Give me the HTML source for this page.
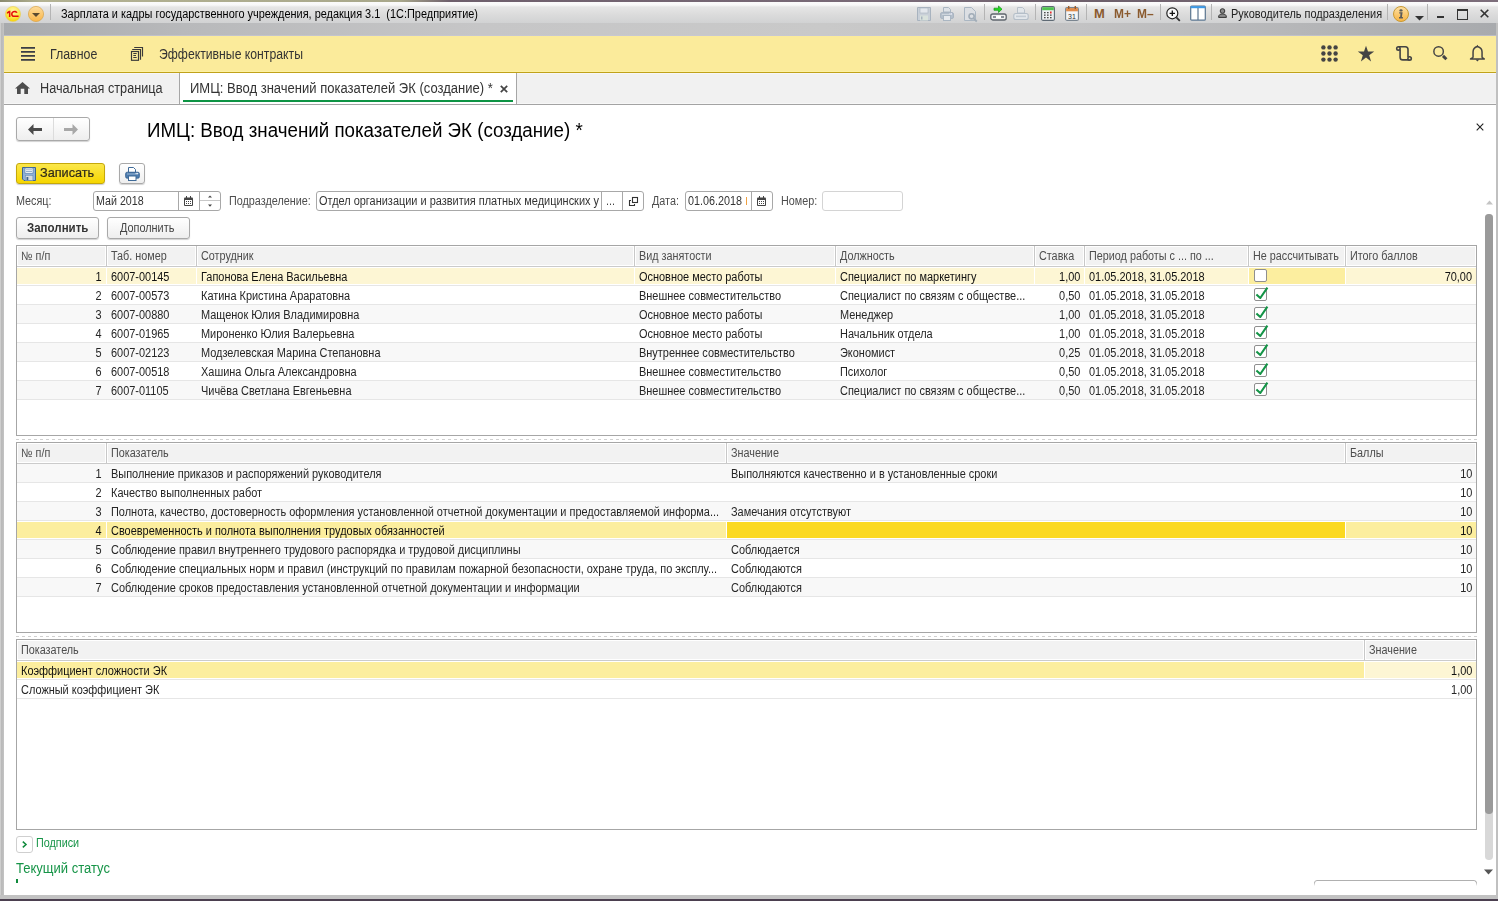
<!DOCTYPE html>
<html><head><meta charset="utf-8">
<style>
*{margin:0;padding:0;box-sizing:border-box}
html,body{width:1498px;height:901px;overflow:hidden;background:#fff;font-family:"Liberation Sans",sans-serif;color:#333}
.a{position:absolute;white-space:nowrap}
svg{position:absolute;overflow:visible}
.sep{position:absolute;width:1px;background:#b4b4b4;top:4px;height:16px}
.fld{position:absolute;height:20px;border:1px solid #a8a8a8;border-radius:3px;background:#fff}
.btn{position:absolute;border:1px solid #a9a9a9;border-radius:3px;background:linear-gradient(#ffffff,#eeeeee);box-shadow:0 1px 1px rgba(0,0,0,.18)}
.chk{position:absolute;width:13px;height:13px;border:1px solid #8f8f8f;border-radius:2px;background:#fff}
.dash{position:absolute;left:16px;width:1461px;height:1px;background:repeating-linear-gradient(90deg,#d0d0d0 0 3px,transparent 3px 6px)}
</style></head><body>
<div class="a" style="left:0;top:0;width:1498px;height:2px;background:linear-gradient(90deg,#8a8a70 0px,#b3b292 40px,#a9a88c 400px,#6e5f6c 450px,#7a6b78 900px,#6e606c 1100px,#7d6e7b 1498px)"></div>
<div class="a" style="left:0;top:2px;width:1498px;height:21px;background:linear-gradient(#fbfbfb 0px,#f8f8f8 3px,#e6e6e6 5px,#dcdcdc 12px,#d1d2d3 21px)"></div>
<div class="a" style="left:4px;top:23px;width:1492px;height:13px;background:linear-gradient(90deg,#a8aaad 0%,#b8b9bb 12%,#c6c6c7 32%,#c9c9c9 55%,#c3c3c4 72%,#b4b5b7 88%,#a8aaad 100%)"></div>
<div class="a" style="left:4px;top:35px;width:1492px;height:1px;background:rgba(200,200,215,.6)"></div>
<div class="a" style="left:0;top:23px;width:4px;height:876px;background:linear-gradient(to right,#d8d8d8,#b8b8b8 40%,#c4c4c4)"></div>
<div class="a" style="left:1496px;top:23px;width:2px;height:876px;background:#c0c0c0"></div>
<div class="a" style="left:4px;top:36px;width:1492px;height:38px;background:linear-gradient(#fbeb9b 0 35px,#fdf1a2 35px 36px,#c0a21a 36px 37px,#f6f6f9 37px 38px)"></div>
<div class="a" style="left:4px;top:74px;width:1492px;height:31px;background:linear-gradient(#f1f1f1 0 29px,#f7f7f7 29px 30px,#a3a3a3 30px 31px)"></div>
<div class="a" style="left:0;top:895px;width:1498px;height:4px;background:#c2c2c2"></div>
<div class="a" style="left:0;top:899px;width:1498px;height:2px;background:#4b3f4f"></div>


<svg style="left:5px;top:6px" width="16" height="16" viewBox="0 0 16 16">
 <defs><radialGradient id="g1" cx="50%" cy="30%" r="70%"><stop offset="0" stop-color="#fff6a8"/><stop offset=".6" stop-color="#fce84a"/><stop offset="1" stop-color="#f6d000"/></radialGradient></defs>
 <circle cx="8" cy="8" r="7.6" fill="url(#g1)" stroke="#e9cf60" stroke-width=".6"/>
 <path d="M1.9 6.3 L4 4.7 H5.4 V11.1 H3.9 V6.9 L1.9 7.8 Z" fill="#e60f0a"/>
 <path d="M12.6 6.6 C12 5.3 10.9 4.7 9.6 4.7 C7.5 4.7 6 6.1 6 8 C6 9.9 7.2 11.1 9 11.1 H13.6 V9.6 H9.3 C8.2 9.6 7.6 9 7.6 8 C7.6 6.9 8.4 6.2 9.6 6.2 C10.3 6.2 10.8 6.5 11.1 7.1 Z" fill="#e60f0a"/>
</svg>
<svg style="left:28px;top:6px" width="16" height="16" viewBox="0 0 16 16">
 <defs><linearGradient id="g2" x1="0" y1="0" x2="0" y2="1"><stop offset="0" stop-color="#fddc9c"/><stop offset="1" stop-color="#f9b548"/></linearGradient></defs>
 <circle cx="8" cy="8" r="7.6" fill="url(#g2)" stroke="#d9a346" stroke-width=".7"/>
 <path d="M4 7 H12 L8 11 Z" fill="#5a4a30"/>
</svg>
<div class="sep" style="left:50px"></div>

<div class="a" style="left:61px;top:8px;font-size:12.5px;line-height:12.5px;color:#000;font-weight:normal;transform:scaleX(0.874);transform-origin:0 0;white-space:pre">Зарплата и кадры государственного учреждения, редакция 3.1  (1С:Предприятие)</div>

<svg style="left:917px;top:7px" width="14" height="14" viewBox="0 0 14 14"><path d="M.5 .5H13.5V13.5H.5Z" fill="#c9d0d8" stroke="#a8b3bf"/><rect x="3" y="1" width="8" height="5" fill="#e3e7ec" stroke="#a8b3bf" stroke-width=".6"/><rect x="3" y="8.5" width="8" height="5" fill="#d9e2dc"/><rect x="4" y="9.5" width="1.5" height="3" fill="#a8b3bf"/></svg>
<svg style="left:940px;top:7px" width="14" height="14" viewBox="0 0 14 14"><path d="M3.5 .5H8.5L10.5 2.5V5H3.5Z" fill="#dfe3e8" stroke="#aab6c2"/><rect x=".5" y="5.5" width="13" height="6" rx="1.5" fill="#b4bfcb" stroke="#a3afbc" stroke-width=".8"/><path d="M2 7.5H12" stroke="#d4dae1" stroke-width=".8"/><rect x="3.5" y="8.5" width="7" height="5" fill="#e6e9ed" stroke="#aab6c2"/><rect x="9.5" y="6.3" width="1" height="1" fill="#eef"/><rect x="11" y="6.3" width="1" height="1" fill="#eef"/></svg>
<svg style="left:964px;top:7px" width="15" height="15" viewBox="0 0 15 15"><path d="M.5 .5H7.5L11.5 4.5V13.5H.5Z" fill="#dcdfe3" stroke="#aab6c2"/><circle cx="7.6" cy="9.3" r="2.6" fill="none" stroke="#a2adb8" stroke-width="1.6"/><path d="M9.6 11.3L12.8 14.5" stroke="#a2adb8" stroke-width="1.8"/></svg>
<div class="sep" style="left:984px"></div>
<svg style="left:990px;top:5px" width="17" height="16" viewBox="0 0 17 16"><path d="M4 3.2H8.5V1L12 4.2L8.5 7.5V5.3H4Z" fill="#22dd22" stroke="#149414" stroke-width=".7"/><rect x=".8" y="9" width="15.4" height="6" rx="2" fill="#f0f0f0" stroke="#5f666e" stroke-width="1.3"/><rect x="3" y="11" width="11" height="2" fill="#8a9098"/><rect x="6" y="11" width="5" height="2" fill="#fff"/></svg>
<svg style="left:1013px;top:7px" width="16" height="14" viewBox="0 0 16 14"><path d="M4.5 .5H9.5L11.5 2.5V6H4.5Z" fill="#e2e6ea" stroke="#b8c1ca"/><rect x=".8" y="6.5" width="14.4" height="6" rx="2" fill="#e3e7eb" stroke="#b4bec8" stroke-width="1.1"/><rect x="3" y="8.6" width="10" height="1.6" fill="#c3cbd3"/></svg>
<div class="sep" style="left:1035px"></div>
<svg style="left:1041px;top:6px" width="14" height="15" viewBox="0 0 14 15"><rect x=".6" y=".6" width="12.8" height="13.8" rx="1.5" fill="#eef1f3" stroke="#5f6a74" stroke-width="1.1"/><rect x="1.2" y="1.2" width="11.6" height="3" fill="#52c552"/><g fill="#4a4a4a"><rect x="3" y="6" width="1.6" height="1.3"/><rect x="6" y="6" width="1.6" height="1.3"/><rect x="3" y="8.5" width="1.6" height="1.3"/><rect x="6" y="8.5" width="1.6" height="1.3"/><rect x="9" y="8.5" width="1.6" height="1.3"/><rect x="3" y="11" width="1.6" height="1.3"/><rect x="6" y="11" width="1.6" height="1.3"/><rect x="9" y="11" width="1.6" height="1.3"/></g><rect x="9" y="5.5" width="1.6" height="2" fill="#e52a2a"/></svg>
<svg style="left:1065px;top:6px" width="14" height="15" viewBox="0 0 14 15"><rect x=".6" y="1.6" width="12.8" height="12.8" rx="1.5" fill="#f4f5f6" stroke="#7a8590" stroke-width="1.1"/><rect x="1.1" y="2.1" width="11.8" height="3.2" fill="#e08b4a"/><rect x="3" y="0" width="1.4" height="3" fill="#9a5a2a"/><rect x="9.6" y="0" width="1.4" height="3" fill="#9a5a2a"/><text x="7" y="12.6" font-size="7" text-anchor="middle" fill="#333" font-family="Liberation Sans">31</text></svg>
<div class="sep" style="left:1086px"></div>
<svg style="left:1166px;top:7px" width="15" height="15" viewBox="0 0 15 15"><circle cx="6.3" cy="6.3" r="5.5" fill="#fafafa" stroke="#222" stroke-width="1.2"/><path d="M3.6 6.3H9M6.3 3.6V9" stroke="#111" stroke-width="1.3"/><path d="M10.3 10.3 L13.8 13.8" stroke="#333" stroke-width="1.8"/></svg>
<svg style="left:1190px;top:5px" width="16" height="16" viewBox="0 0 16 16"><rect x=".7" y="1.2" width="14.6" height="14" rx="1" fill="#fff" stroke="#5a7590" stroke-width="1.2"/><rect x=".7" y="1.2" width="14.6" height="2" fill="#3b9ae8"/><path d="M8 3V15" stroke="#5a7590" stroke-width="1.2"/></svg>
<div class="sep" style="left:1160px"></div>
<div class="sep" style="left:1211px"></div>
<svg style="left:1218px;top:8px" width="9" height="10" viewBox="0 0 9 10"><circle cx="4.5" cy="3" r="2.3" fill="#8a8a8a" stroke="#333" stroke-width="1"/><path d="M.6 9.4 C.6 6.6 2.2 6 4.5 6 C6.8 6 8.4 6.6 8.4 9.4Z" fill="#8a8a8a" stroke="#333" stroke-width="1" stroke-linejoin="round"/></svg>
<div class="sep" style="left:1387px"></div>
<svg style="left:1393px;top:6px" width="16" height="16" viewBox="0 0 16 16"><defs><linearGradient id="g3" x1="0" y1="0" x2="0" y2="1"><stop offset="0" stop-color="#fde1a6"/><stop offset="1" stop-color="#f8b443"/></linearGradient></defs><circle cx="8" cy="8" r="7.5" fill="url(#g3)" stroke="#c99a34" stroke-width="1"/><ellipse cx="8" cy="4.4" rx="1.6" ry="1.2" fill="#5a5a5a"/><path d="M6.2 6.2H9.6L8.9 11H9.9V12.6H6V11H7.1L7.5 7.6H6.2Z" fill="#5a5a5a"/></svg>
<svg style="left:1415px;top:16px" width="9" height="5" viewBox="0 0 9 5"><path d="M0 0H9L4.5 4.5Z" fill="#333"/></svg>
<div class="sep" style="left:1427px"></div>
<div class="a" style="left:1437px;top:16px;width:7px;height:2px;background:#333"></div>
<div class="a" style="left:1457px;top:9px;width:11px;height:11px;border:1px solid #333;border-top-width:2px"></div>
<svg style="left:1480px;top:9px" width="9" height="9" viewBox="0 0 9 9"><path d="M.7 .7L8.3 8.3M8.3 .7L.7 8.3" stroke="#333" stroke-width="1.6"/></svg>

<div class="a" style="left:1094px;top:7px;font-size:13px;line-height:13px;color:#8a5a2e;font-weight:bold;transform:scaleX(1.0);transform-origin:0 0;">M</div>
<div class="a" style="left:1114px;top:7px;font-size:13px;line-height:13px;color:#8a5a2e;font-weight:bold;transform:scaleX(0.92);transform-origin:0 0;">M+</div>
<div class="a" style="left:1137px;top:7px;font-size:13px;line-height:13px;color:#8a5a2e;font-weight:bold;transform:scaleX(0.92);transform-origin:0 0;">M–</div>
<div class="a" style="left:1231px;top:8px;font-size:12.5px;line-height:12.5px;color:#222;font-weight:normal;transform:scaleX(0.875);transform-origin:0 0;">Руководитель подразделения</div>

<svg style="left:21px;top:47px" width="14" height="14" viewBox="0 0 14 14"><path d="M0 .95H14M0 4.95H14M0 8.95H14M0 12.95H14" stroke="#3a3d45" stroke-width="1.8"/></svg>
<svg style="left:130px;top:46px" width="14" height="16" viewBox="0 0 14 16"><g fill="none" stroke="#3a3a3a" stroke-width="1.15"><rect x="1.5" y="5.5" width="7" height="8.8"/><path d="M2.2 3.5H10.5V13.8"/><path d="M4.2 1.5H12.5V10.6"/></g><path d="M3.3 7.5H6.7M3.3 9.5H6M3.3 11.5H6.7" stroke="#3a3a3a" stroke-width="1"/></svg>
<svg style="left:1321px;top:45px" width="17" height="17" viewBox="0 0 17 17"><g fill="#444"><circle cx="2.4" cy="2.4" r="2.2"/><circle cx="8.5" cy="2.4" r="2.2"/><circle cx="14.6" cy="2.4" r="2.2"/><circle cx="2.4" cy="8.5" r="2.2"/><circle cx="8.5" cy="8.5" r="2.2"/><circle cx="14.6" cy="8.5" r="2.2"/><circle cx="2.4" cy="14.6" r="2.2"/><circle cx="8.5" cy="14.6" r="2.2"/><circle cx="14.6" cy="14.6" r="2.2"/></g></svg>
<svg style="left:1357px;top:45px" width="18" height="17" viewBox="0 0 18 17"><path d="M9 .8L11 6.6H17.2L12.2 10.3L14.1 16.4L9 12.6L3.9 16.4L5.8 10.3L.8 6.6H7Z" fill="#444"/></svg>
<svg style="left:1394px;top:44px" width="20" height="20" viewBox="0 0 20 20"><g fill="none" stroke="#444" stroke-width="1.6"><path d="M4.4 2.8 H11.3 Q14 2.8 14 5.5 V13"/><path d="M6.1 5.5 V13.2 Q6.1 15.9 8.8 15.9 H15.4"/><circle cx="4.4" cy="4.4" r="1.7"/><circle cx="15.6" cy="14.4" r="1.7"/></g></svg>
<svg style="left:1432px;top:45px" width="17" height="17" viewBox="0 0 17 17"><circle cx="6.6" cy="6.4" r="4.75" fill="none" stroke="#444" stroke-width="1.45"/><path d="M11 10.9 L14.4 14.3" stroke="#444" stroke-width="2.9"/></svg>
<svg style="left:1469px;top:44px" width="17" height="19" viewBox="0 0 17 19"><path d="M4.05 13.3 V8 C4.05 5 6 3 8.4 2.4 C10.8 3 13.05 5 13.05 8 V13.3 C13.05 14 15.3 14.2 15.3 14.9 H1.5 C1.5 14.2 4.05 14 4.05 13.3Z" fill="none" stroke="#444" stroke-width="1.5" stroke-linejoin="round"/><path d="M7.2 2.7 L8.4 .7 L9.6 2.7Z M6.5 15.4 L8.4 17.6 L10.3 15.4Z" fill="#444"/></svg>

<div class="a" style="left:50px;top:47px;font-size:14px;line-height:14px;color:#333;font-weight:normal;transform:scaleX(0.884);transform-origin:0 0;">Главное</div>
<div class="a" style="left:159px;top:47px;font-size:14px;line-height:14px;color:#333;font-weight:normal;transform:scaleX(0.873);transform-origin:0 0;">Эффективные контракты</div>

<svg style="left:15px;top:82px" width="15" height="12" viewBox="0 0 15 12"><path d="M7.5 0L15 6.6H13V12H9.3V6.8H5.7V12H2V6.6H0Z" fill="#4d4d4d"/></svg>
<div class="a" style="left:179px;top:73px;width:338px;height:31px;background:#fff;border-left:1px solid #a6a6a6;border-right:1px solid #a6a6a6"></div>
<svg style="left:500px;top:85px" width="8" height="8" viewBox="0 0 8 8"><path d="M.8 .8L7.2 7.2M7.2 .8L.8 7.2" stroke="#444" stroke-width="1.7"/></svg>
<div class="a" style="left:183px;top:100px;width:330px;height:2px;background:#0d9444"></div>

<div class="a" style="left:40px;top:81px;font-size:14px;line-height:14px;color:#333;font-weight:normal;transform:scaleX(0.905);transform-origin:0 0;">Начальная страница</div>
<div class="a" style="left:190px;top:81px;font-size:14px;line-height:14px;color:#333;font-weight:normal;transform:scaleX(0.93);transform-origin:0 0;">ИМЦ: Ввод значений показателей ЭК (создание) *</div>

<div class="btn" style="left:16px;top:117px;width:74px;height:24px"></div>
<div class="a" style="left:53px;top:118px;width:1px;height:22px;background:#dcdcdc"></div>
<svg style="left:28px;top:124px" width="14" height="11" viewBox="0 0 14 11"><path d="M0 5.5L5.5 0V4H14V7H5.5V11Z" fill="#4a4a4a"/></svg>
<svg style="left:64px;top:124px" width="14" height="11" viewBox="0 0 14 11"><path d="M14 5.5L8.5 0V4H0V7H8.5V11Z" fill="#a8a8a8"/></svg>
<svg style="left:1475.5px;top:122.5px" width="8" height="8" viewBox="0 0 8 8"><path d="M.7 .7L7.3 7.3M7.3 .7L.7 7.3" stroke="#222" stroke-width="1.1"/></svg>
<div class="a" style="left:16px;top:163px;width:89px;height:21px;border:1px solid #c5a80a;border-radius:3px;background:linear-gradient(#fbe74a,#f6d600);box-shadow:0 1px 1px rgba(0,0,0,.2)"></div>
<svg style="left:22px;top:167px" width="14" height="14" viewBox="0 0 14 14"><path d="M.5 .5H13.5V13.5H2L.5 12Z" fill="#8fb0d6" stroke="#3d6590"/><rect x="3" y="1" width="8" height="5.2" fill="#fff" stroke="#5a80aa" stroke-width=".7"/><path d="M4 2.8H10M4 4.5H10" stroke="#7a9cc0" stroke-width=".8"/><rect x="3.3" y="8.3" width="7.6" height="5.2" fill="#d8dcdf" stroke="#6b8fb5" stroke-width=".6"/><rect x="4.5" y="10" width="1.8" height="3.2" fill="#3d6590"/></svg>
<div class="btn" style="left:119px;top:163px;width:26px;height:21px"></div>
<svg style="left:125px;top:167px" width="15" height="14" viewBox="0 0 15 14"><path d="M3.5 .5H8.5L10.5 2.5V5.5H3.5Z" fill="#fff" stroke="#3f6a98"/><rect x=".6" y="5.2" width="13.8" height="6" rx="1.5" fill="#4d7cae" stroke="#35608e" stroke-width=".8"/><path d="M2 7H13" stroke="#a9c2dc" stroke-width=".8"/><rect x="3.5" y="9" width="7.5" height="4.5" fill="#fff" stroke="#3f6a98"/><rect x="10.6" y="6.1" width="1.1" height="1" fill="#fff"/><rect x="12.1" y="6.1" width="1.1" height="1" fill="#fff"/></svg>

<div class="a" style="left:147px;top:120px;font-size:20px;line-height:20px;color:#000;font-weight:normal;transform:scaleX(0.937);transform-origin:0 0;">ИМЦ: Ввод значений показателей ЭК (создание) *</div>
<div class="a" style="left:40px;top:166px;font-size:13px;line-height:13px;color:#2e2a1a;font-weight:normal;transform:scaleX(0.975);transform-origin:0 0;-webkit-text-stroke:.22px #2e2a1a">Записать</div>

<div class="fld" style="left:93px;top:191px;width:128px"></div>
<div class="a" style="left:178px;top:192px;width:1px;height:18px;background:#a8a8a8"></div>
<div class="a" style="left:199px;top:192px;width:1px;height:18px;background:#a8a8a8"></div>
<div class="a" style="left:200px;top:200px;width:20px;height:1px;background:#c8c8c8"></div>
<svg style="left:184px;top:196px" width="9" height="10" viewBox="0 0 9 10"><rect x="0" y="1.5" width="9" height="8.5" rx="1" fill="#444"/><rect x="1" y="4" width="7" height="5" fill="#fff"/><g fill="#444"><rect x="2" y="5" width="1" height="1"/><rect x="4" y="5" width="1" height="1"/><rect x="6" y="5" width="1" height="1"/><rect x="2" y="7" width="1" height="1"/><rect x="4" y="7" width="1" height="1"/><rect x="6" y="7" width="1" height="1"/></g><rect x="2" y="0" width="1" height="2" fill="#444"/><rect x="6" y="0" width="1" height="2" fill="#444"/></svg>
<svg style="left:207.5px;top:194.5px" width="4" height="13" viewBox="0 0 4 13"><path d="M0 2.6L2 .4L4 2.6Z M0 9.6L2 11.8L4 9.6Z" fill="#444"/></svg>
<div class="fld" style="left:316px;top:191px;width:328px"></div>
<div class="a" style="left:601px;top:192px;width:1px;height:18px;background:#a8a8a8"></div>
<div class="a" style="left:622px;top:192px;width:1px;height:18px;background:#a8a8a8"></div>
<svg style="left:628px;top:196px" width="10" height="10" viewBox="0 0 10 10"><rect x="4.5" y="1.5" width="5" height="5" fill="none" stroke="#333" stroke-width="1.1"/><path d="M3 4.5H1.5V9.5H6.5V8" fill="none" stroke="#333" stroke-width="1.1"/></svg>
<div class="fld" style="left:685px;top:191px;width:88px"></div>
<div class="a" style="left:746px;top:197px;width:1px;height:8px;background:#f0a040"></div>
<div class="a" style="left:751px;top:192px;width:1px;height:18px;background:#a8a8a8"></div>
<svg style="left:757px;top:196px" width="9" height="10" viewBox="0 0 9 10"><rect x="0" y="1.5" width="9" height="8.5" rx="1" fill="#444"/><rect x="1" y="4" width="7" height="5" fill="#fff"/><g fill="#444"><rect x="2" y="5" width="1" height="1"/><rect x="4" y="5" width="1" height="1"/><rect x="6" y="5" width="1" height="1"/><rect x="2" y="7" width="1" height="1"/><rect x="4" y="7" width="1" height="1"/><rect x="6" y="7" width="1" height="1"/></g><rect x="2" y="0" width="1" height="2" fill="#444"/><rect x="6" y="0" width="1" height="2" fill="#444"/></svg>
<div class="fld" style="left:822px;top:191px;width:81px;border-color:#d4d4d4"></div>
<div class="btn" style="left:16px;top:217px;width:83px;height:22px"></div>
<div class="btn" style="left:107px;top:217px;width:83px;height:22px"></div>

<div class="a" style="left:16px;top:195px;font-size:12px;line-height:12px;color:#4d4d4d;font-weight:normal;transform:scaleX(0.9);transform-origin:0 0;">Месяц:</div>
<div class="a" style="left:96px;top:195px;font-size:12px;line-height:12px;color:#333;font-weight:normal;transform:scaleX(0.89);transform-origin:0 0;">Май 2018</div>
<div class="a" style="left:229px;top:195px;font-size:12px;line-height:12px;color:#4d4d4d;font-weight:normal;transform:scaleX(0.9);transform-origin:0 0;">Подразделение:</div>
<div class="a" style="left:318px;top:192px;width:283px;height:18px;overflow:hidden"><div class="a" style="left:1px;top:3px;font-size:12px;line-height:12px;color:#333;font-weight:normal;transform:scaleX(0.912);transform-origin:0 0;">Отдел организации и развития платных медицинских у</div></div>
<div class="a" style="left:606px;top:195px;font-size:12px;line-height:12px;color:#444;font-weight:normal;transform:scaleX(0.9);transform-origin:0 0;">...</div>
<div class="a" style="left:652px;top:195px;font-size:12px;line-height:12px;color:#4d4d4d;font-weight:normal;transform:scaleX(0.9);transform-origin:0 0;">Дата:</div>
<div class="a" style="left:688px;top:195px;font-size:12px;line-height:12px;color:#333;font-weight:normal;transform:scaleX(0.9);transform-origin:0 0;">01.06.2018</div>
<div class="a" style="left:781px;top:195px;font-size:12px;line-height:12px;color:#4d4d4d;font-weight:normal;transform:scaleX(0.9);transform-origin:0 0;">Номер:</div>
<div class="a" style="left:27px;top:222px;font-size:12px;line-height:12px;color:#333;font-weight:bold;transform:scaleX(0.96);transform-origin:0 0;">Заполнить</div>
<div class="a" style="left:120px;top:222px;font-size:12px;line-height:12px;color:#444;font-weight:normal;transform:scaleX(0.906);transform-origin:0 0;">Дополнить</div>
<div class="a" style="left:16px;top:245px;width:1461px;height:191px;border:1px solid #a6a6a6;background:#fff"></div>
<div class="a" style="left:18px;top:247px;width:87px;height:18px;background:#f2f2f2"></div>
<div class="a" style="left:21px;top:250px;font-size:12px;line-height:12px;color:#4d4d4d;font-weight:normal;transform:scaleX(0.9);transform-origin:0 0;">№ п/п</div>
<div class="a" style="left:108px;top:247px;width:87px;height:18px;background:#f2f2f2"></div>
<div class="a" style="left:106px;top:246px;width:1px;height:20px;background:#c8c8c8"></div>
<div class="a" style="left:111px;top:250px;font-size:12px;line-height:12px;color:#4d4d4d;font-weight:normal;transform:scaleX(0.9);transform-origin:0 0;">Таб. номер</div>
<div class="a" style="left:198px;top:247px;width:435px;height:18px;background:#f2f2f2"></div>
<div class="a" style="left:196px;top:246px;width:1px;height:20px;background:#c8c8c8"></div>
<div class="a" style="left:201px;top:250px;font-size:12px;line-height:12px;color:#4d4d4d;font-weight:normal;transform:scaleX(0.9);transform-origin:0 0;">Сотрудник</div>
<div class="a" style="left:636px;top:247px;width:198px;height:18px;background:#f2f2f2"></div>
<div class="a" style="left:634px;top:246px;width:1px;height:20px;background:#c8c8c8"></div>
<div class="a" style="left:639px;top:250px;font-size:12px;line-height:12px;color:#4d4d4d;font-weight:normal;transform:scaleX(0.9);transform-origin:0 0;">Вид занятости</div>
<div class="a" style="left:837px;top:247px;width:196px;height:18px;background:#f2f2f2"></div>
<div class="a" style="left:835px;top:246px;width:1px;height:20px;background:#c8c8c8"></div>
<div class="a" style="left:840px;top:250px;font-size:12px;line-height:12px;color:#4d4d4d;font-weight:normal;transform:scaleX(0.9);transform-origin:0 0;">Должность</div>
<div class="a" style="left:1036px;top:247px;width:47px;height:18px;background:#f2f2f2"></div>
<div class="a" style="left:1034px;top:246px;width:1px;height:20px;background:#c8c8c8"></div>
<div class="a" style="left:1039px;top:250px;font-size:12px;line-height:12px;color:#4d4d4d;font-weight:normal;transform:scaleX(0.9);transform-origin:0 0;">Ставка</div>
<div class="a" style="left:1086px;top:247px;width:161px;height:18px;background:#f2f2f2"></div>
<div class="a" style="left:1084px;top:246px;width:1px;height:20px;background:#c8c8c8"></div>
<div class="a" style="left:1089px;top:250px;font-size:12px;line-height:12px;color:#4d4d4d;font-weight:normal;transform:scaleX(0.9);transform-origin:0 0;">Период работы с ... по ...</div>
<div class="a" style="left:1250px;top:247px;width:94px;height:18px;background:#f2f2f2"></div>
<div class="a" style="left:1248px;top:246px;width:1px;height:20px;background:#c8c8c8"></div>
<div class="a" style="left:1253px;top:250px;font-size:12px;line-height:12px;color:#4d4d4d;font-weight:normal;transform:scaleX(0.9);transform-origin:0 0;">Не рассчитывать</div>
<div class="a" style="left:1347px;top:247px;width:128px;height:18px;background:#f2f2f2"></div>
<div class="a" style="left:1345px;top:246px;width:1px;height:20px;background:#c8c8c8"></div>
<div class="a" style="left:1350px;top:250px;font-size:12px;line-height:12px;color:#4d4d4d;font-weight:normal;transform:scaleX(0.9);transform-origin:0 0;">Итого баллов</div>
<div class="a" style="left:17px;top:266px;width:1459px;height:1px;background:#cbcbcb"></div>
<div class="a" style="left:17px;top:268px;width:89px;height:16px;background:#fdf6d4"></div>
<div class="a" style="left:107px;top:268px;width:89px;height:16px;background:#fdf6d4"></div>
<div class="a" style="left:197px;top:268px;width:437px;height:16px;background:#fdf6d4"></div>
<div class="a" style="left:635px;top:268px;width:200px;height:16px;background:#fdf6d4"></div>
<div class="a" style="left:836px;top:268px;width:198px;height:16px;background:#fdf6d4"></div>
<div class="a" style="left:1035px;top:268px;width:49px;height:16px;background:#fdf6d4"></div>
<div class="a" style="left:1085px;top:268px;width:163px;height:16px;background:#fdf6d4"></div>
<div class="a" style="left:1249px;top:268px;width:96px;height:16px;background:#fcee9f"></div>
<div class="a" style="left:1346px;top:268px;width:130px;height:16px;background:#fdf6d4"></div>
<div class="a" style="left:17px;top:285px;width:1459px;height:1px;background:#e6e6e6"></div>
<div class="a" style="right:1396px;top:271px;font-size:12px;line-height:12px;color:#111;font-weight:normal;transform:scaleX(0.912);transform-origin:100% 0;">1</div>
<div class="a" style="left:111px;top:271px;font-size:12px;line-height:12px;color:#111;font-weight:normal;transform:scaleX(0.912);transform-origin:0 0;">6007-00145</div>
<div class="a" style="left:201px;top:271px;font-size:12px;line-height:12px;color:#111;font-weight:normal;transform:scaleX(0.912);transform-origin:0 0;">Гапонова Елена Васильевна</div>
<div class="a" style="left:639px;top:271px;font-size:12px;line-height:12px;color:#111;font-weight:normal;transform:scaleX(0.912);transform-origin:0 0;">Основное место работы</div>
<div class="a" style="left:840px;top:271px;font-size:12px;line-height:12px;color:#111;font-weight:normal;transform:scaleX(0.912);transform-origin:0 0;">Специалист по маркетингу</div>
<div class="a" style="right:418px;top:271px;font-size:12px;line-height:12px;color:#111;font-weight:normal;transform:scaleX(0.912);transform-origin:100% 0;">1,00</div>
<div class="a" style="left:1089px;top:271px;font-size:12px;line-height:12px;color:#111;font-weight:normal;transform:scaleX(0.912);transform-origin:0 0;">01.05.2018, 31.05.2018</div>
<div class="a" style="right:26px;top:271px;font-size:12px;line-height:12px;color:#111;font-weight:normal;transform:scaleX(0.912);transform-origin:100% 0;">70,00</div>
<div class="chk" style="left:1254px;top:269px"></div>
<div class="a" style="left:17px;top:304px;width:1459px;height:1px;background:#e6e6e6"></div>
<div class="a" style="right:1396px;top:290px;font-size:12px;line-height:12px;color:#262626;font-weight:normal;transform:scaleX(0.912);transform-origin:100% 0;">2</div>
<div class="a" style="left:111px;top:290px;font-size:12px;line-height:12px;color:#262626;font-weight:normal;transform:scaleX(0.912);transform-origin:0 0;">6007-00573</div>
<div class="a" style="left:201px;top:290px;font-size:12px;line-height:12px;color:#262626;font-weight:normal;transform:scaleX(0.912);transform-origin:0 0;">Катина Кристина Араратовна</div>
<div class="a" style="left:639px;top:290px;font-size:12px;line-height:12px;color:#262626;font-weight:normal;transform:scaleX(0.912);transform-origin:0 0;">Внешнее совместительство</div>
<div class="a" style="left:840px;top:290px;font-size:12px;line-height:12px;color:#262626;font-weight:normal;transform:scaleX(0.912);transform-origin:0 0;">Специалист по связям с обществе...</div>
<div class="a" style="right:418px;top:290px;font-size:12px;line-height:12px;color:#262626;font-weight:normal;transform:scaleX(0.912);transform-origin:100% 0;">0,50</div>
<div class="a" style="left:1089px;top:290px;font-size:12px;line-height:12px;color:#262626;font-weight:normal;transform:scaleX(0.912);transform-origin:0 0;">01.05.2018, 31.05.2018</div>
<div class="chk" style="left:1254px;top:288px"></div>
<svg style="left:1254px;top:286px" width="15" height="14" viewBox="0 0 15 14"><path d="M2.4 8.4 L6.3 12 L13.4 1.6" fill="none" stroke="#149447" stroke-width="2.1" stroke-linejoin="round"/></svg>
<div class="a" style="left:17px;top:305px;width:1459px;height:18px;background:#f8f8f8"></div>
<div class="a" style="left:17px;top:323px;width:1459px;height:1px;background:#e6e6e6"></div>
<div class="a" style="right:1396px;top:309px;font-size:12px;line-height:12px;color:#262626;font-weight:normal;transform:scaleX(0.912);transform-origin:100% 0;">3</div>
<div class="a" style="left:111px;top:309px;font-size:12px;line-height:12px;color:#262626;font-weight:normal;transform:scaleX(0.912);transform-origin:0 0;">6007-00880</div>
<div class="a" style="left:201px;top:309px;font-size:12px;line-height:12px;color:#262626;font-weight:normal;transform:scaleX(0.912);transform-origin:0 0;">Мащенок Юлия Владимировна</div>
<div class="a" style="left:639px;top:309px;font-size:12px;line-height:12px;color:#262626;font-weight:normal;transform:scaleX(0.912);transform-origin:0 0;">Основное место работы</div>
<div class="a" style="left:840px;top:309px;font-size:12px;line-height:12px;color:#262626;font-weight:normal;transform:scaleX(0.912);transform-origin:0 0;">Менеджер</div>
<div class="a" style="right:418px;top:309px;font-size:12px;line-height:12px;color:#262626;font-weight:normal;transform:scaleX(0.912);transform-origin:100% 0;">1,00</div>
<div class="a" style="left:1089px;top:309px;font-size:12px;line-height:12px;color:#262626;font-weight:normal;transform:scaleX(0.912);transform-origin:0 0;">01.05.2018, 31.05.2018</div>
<div class="chk" style="left:1254px;top:307px"></div>
<svg style="left:1254px;top:305px" width="15" height="14" viewBox="0 0 15 14"><path d="M2.4 8.4 L6.3 12 L13.4 1.6" fill="none" stroke="#149447" stroke-width="2.1" stroke-linejoin="round"/></svg>
<div class="a" style="left:17px;top:342px;width:1459px;height:1px;background:#e6e6e6"></div>
<div class="a" style="right:1396px;top:328px;font-size:12px;line-height:12px;color:#262626;font-weight:normal;transform:scaleX(0.912);transform-origin:100% 0;">4</div>
<div class="a" style="left:111px;top:328px;font-size:12px;line-height:12px;color:#262626;font-weight:normal;transform:scaleX(0.912);transform-origin:0 0;">6007-01965</div>
<div class="a" style="left:201px;top:328px;font-size:12px;line-height:12px;color:#262626;font-weight:normal;transform:scaleX(0.912);transform-origin:0 0;">Мироненко Юлия Валерьевна</div>
<div class="a" style="left:639px;top:328px;font-size:12px;line-height:12px;color:#262626;font-weight:normal;transform:scaleX(0.912);transform-origin:0 0;">Основное место работы</div>
<div class="a" style="left:840px;top:328px;font-size:12px;line-height:12px;color:#262626;font-weight:normal;transform:scaleX(0.912);transform-origin:0 0;">Начальник отдела</div>
<div class="a" style="right:418px;top:328px;font-size:12px;line-height:12px;color:#262626;font-weight:normal;transform:scaleX(0.912);transform-origin:100% 0;">1,00</div>
<div class="a" style="left:1089px;top:328px;font-size:12px;line-height:12px;color:#262626;font-weight:normal;transform:scaleX(0.912);transform-origin:0 0;">01.05.2018, 31.05.2018</div>
<div class="chk" style="left:1254px;top:326px"></div>
<svg style="left:1254px;top:324px" width="15" height="14" viewBox="0 0 15 14"><path d="M2.4 8.4 L6.3 12 L13.4 1.6" fill="none" stroke="#149447" stroke-width="2.1" stroke-linejoin="round"/></svg>
<div class="a" style="left:17px;top:343px;width:1459px;height:18px;background:#f8f8f8"></div>
<div class="a" style="left:17px;top:361px;width:1459px;height:1px;background:#e6e6e6"></div>
<div class="a" style="right:1396px;top:347px;font-size:12px;line-height:12px;color:#262626;font-weight:normal;transform:scaleX(0.912);transform-origin:100% 0;">5</div>
<div class="a" style="left:111px;top:347px;font-size:12px;line-height:12px;color:#262626;font-weight:normal;transform:scaleX(0.912);transform-origin:0 0;">6007-02123</div>
<div class="a" style="left:201px;top:347px;font-size:12px;line-height:12px;color:#262626;font-weight:normal;transform:scaleX(0.912);transform-origin:0 0;">Модзелевская Марина Степановна</div>
<div class="a" style="left:639px;top:347px;font-size:12px;line-height:12px;color:#262626;font-weight:normal;transform:scaleX(0.912);transform-origin:0 0;">Внутреннее совместительство</div>
<div class="a" style="left:840px;top:347px;font-size:12px;line-height:12px;color:#262626;font-weight:normal;transform:scaleX(0.912);transform-origin:0 0;">Экономист</div>
<div class="a" style="right:418px;top:347px;font-size:12px;line-height:12px;color:#262626;font-weight:normal;transform:scaleX(0.912);transform-origin:100% 0;">0,25</div>
<div class="a" style="left:1089px;top:347px;font-size:12px;line-height:12px;color:#262626;font-weight:normal;transform:scaleX(0.912);transform-origin:0 0;">01.05.2018, 31.05.2018</div>
<div class="chk" style="left:1254px;top:345px"></div>
<svg style="left:1254px;top:343px" width="15" height="14" viewBox="0 0 15 14"><path d="M2.4 8.4 L6.3 12 L13.4 1.6" fill="none" stroke="#149447" stroke-width="2.1" stroke-linejoin="round"/></svg>
<div class="a" style="left:17px;top:380px;width:1459px;height:1px;background:#e6e6e6"></div>
<div class="a" style="right:1396px;top:366px;font-size:12px;line-height:12px;color:#262626;font-weight:normal;transform:scaleX(0.912);transform-origin:100% 0;">6</div>
<div class="a" style="left:111px;top:366px;font-size:12px;line-height:12px;color:#262626;font-weight:normal;transform:scaleX(0.912);transform-origin:0 0;">6007-00518</div>
<div class="a" style="left:201px;top:366px;font-size:12px;line-height:12px;color:#262626;font-weight:normal;transform:scaleX(0.912);transform-origin:0 0;">Хашина Ольга Александровна</div>
<div class="a" style="left:639px;top:366px;font-size:12px;line-height:12px;color:#262626;font-weight:normal;transform:scaleX(0.912);transform-origin:0 0;">Внешнее совместительство</div>
<div class="a" style="left:840px;top:366px;font-size:12px;line-height:12px;color:#262626;font-weight:normal;transform:scaleX(0.912);transform-origin:0 0;">Психолог</div>
<div class="a" style="right:418px;top:366px;font-size:12px;line-height:12px;color:#262626;font-weight:normal;transform:scaleX(0.912);transform-origin:100% 0;">0,50</div>
<div class="a" style="left:1089px;top:366px;font-size:12px;line-height:12px;color:#262626;font-weight:normal;transform:scaleX(0.912);transform-origin:0 0;">01.05.2018, 31.05.2018</div>
<div class="chk" style="left:1254px;top:364px"></div>
<svg style="left:1254px;top:362px" width="15" height="14" viewBox="0 0 15 14"><path d="M2.4 8.4 L6.3 12 L13.4 1.6" fill="none" stroke="#149447" stroke-width="2.1" stroke-linejoin="round"/></svg>
<div class="a" style="left:17px;top:381px;width:1459px;height:18px;background:#f8f8f8"></div>
<div class="a" style="left:17px;top:399px;width:1459px;height:1px;background:#e6e6e6"></div>
<div class="a" style="right:1396px;top:385px;font-size:12px;line-height:12px;color:#262626;font-weight:normal;transform:scaleX(0.912);transform-origin:100% 0;">7</div>
<div class="a" style="left:111px;top:385px;font-size:12px;line-height:12px;color:#262626;font-weight:normal;transform:scaleX(0.912);transform-origin:0 0;">6007-01105</div>
<div class="a" style="left:201px;top:385px;font-size:12px;line-height:12px;color:#262626;font-weight:normal;transform:scaleX(0.912);transform-origin:0 0;">Чичёва Светлана Евгеньевна</div>
<div class="a" style="left:639px;top:385px;font-size:12px;line-height:12px;color:#262626;font-weight:normal;transform:scaleX(0.912);transform-origin:0 0;">Внешнее совместительство</div>
<div class="a" style="left:840px;top:385px;font-size:12px;line-height:12px;color:#262626;font-weight:normal;transform:scaleX(0.912);transform-origin:0 0;">Специалист по связям с обществе...</div>
<div class="a" style="right:418px;top:385px;font-size:12px;line-height:12px;color:#262626;font-weight:normal;transform:scaleX(0.912);transform-origin:100% 0;">0,50</div>
<div class="a" style="left:1089px;top:385px;font-size:12px;line-height:12px;color:#262626;font-weight:normal;transform:scaleX(0.912);transform-origin:0 0;">01.05.2018, 31.05.2018</div>
<div class="chk" style="left:1254px;top:383px"></div>
<svg style="left:1254px;top:381px" width="15" height="14" viewBox="0 0 15 14"><path d="M2.4 8.4 L6.3 12 L13.4 1.6" fill="none" stroke="#149447" stroke-width="2.1" stroke-linejoin="round"/></svg>
<div class="a" style="left:16px;top:442px;width:1461px;height:191px;border:1px solid #a6a6a6;background:#fff"></div>
<div class="a" style="left:18px;top:444px;width:87px;height:18px;background:#f2f2f2"></div>
<div class="a" style="left:21px;top:447px;font-size:12px;line-height:12px;color:#4d4d4d;font-weight:normal;transform:scaleX(0.9);transform-origin:0 0;">№ п/п</div>
<div class="a" style="left:108px;top:444px;width:617px;height:18px;background:#f2f2f2"></div>
<div class="a" style="left:106px;top:443px;width:1px;height:20px;background:#c8c8c8"></div>
<div class="a" style="left:111px;top:447px;font-size:12px;line-height:12px;color:#4d4d4d;font-weight:normal;transform:scaleX(0.9);transform-origin:0 0;">Показатель</div>
<div class="a" style="left:728px;top:444px;width:616px;height:18px;background:#f2f2f2"></div>
<div class="a" style="left:726px;top:443px;width:1px;height:20px;background:#c8c8c8"></div>
<div class="a" style="left:731px;top:447px;font-size:12px;line-height:12px;color:#4d4d4d;font-weight:normal;transform:scaleX(0.9);transform-origin:0 0;">Значение</div>
<div class="a" style="left:1347px;top:444px;width:128px;height:18px;background:#f2f2f2"></div>
<div class="a" style="left:1345px;top:443px;width:1px;height:20px;background:#c8c8c8"></div>
<div class="a" style="left:1350px;top:447px;font-size:12px;line-height:12px;color:#4d4d4d;font-weight:normal;transform:scaleX(0.9);transform-origin:0 0;">Баллы</div>
<div class="a" style="left:17px;top:463px;width:1459px;height:1px;background:#cbcbcb"></div>
<div class="a" style="left:17px;top:464px;width:1459px;height:18px;background:#f8f8f8"></div>
<div class="a" style="left:17px;top:482px;width:1459px;height:1px;background:#e6e6e6"></div>
<div class="a" style="right:1396px;top:468px;font-size:12px;line-height:12px;color:#262626;font-weight:normal;transform:scaleX(0.912);transform-origin:100% 0;">1</div>
<div class="a" style="left:111px;top:468px;font-size:12px;line-height:12px;color:#262626;font-weight:normal;transform:scaleX(0.912);transform-origin:0 0;">Выполнение приказов и распоряжений руководителя</div>
<div class="a" style="left:731px;top:468px;font-size:12px;line-height:12px;color:#262626;font-weight:normal;transform:scaleX(0.912);transform-origin:0 0;">Выполняются качественно и в установленные сроки</div>
<div class="a" style="right:26px;top:468px;font-size:12px;line-height:12px;color:#262626;font-weight:normal;transform:scaleX(0.912);transform-origin:100% 0;">10</div>
<div class="a" style="left:17px;top:501px;width:1459px;height:1px;background:#e6e6e6"></div>
<div class="a" style="right:1396px;top:487px;font-size:12px;line-height:12px;color:#262626;font-weight:normal;transform:scaleX(0.912);transform-origin:100% 0;">2</div>
<div class="a" style="left:111px;top:487px;font-size:12px;line-height:12px;color:#262626;font-weight:normal;transform:scaleX(0.912);transform-origin:0 0;">Качество выполненных работ</div>
<div class="a" style="right:26px;top:487px;font-size:12px;line-height:12px;color:#262626;font-weight:normal;transform:scaleX(0.912);transform-origin:100% 0;">10</div>
<div class="a" style="left:17px;top:502px;width:1459px;height:18px;background:#f8f8f8"></div>
<div class="a" style="left:17px;top:520px;width:1459px;height:1px;background:#e6e6e6"></div>
<div class="a" style="right:1396px;top:506px;font-size:12px;line-height:12px;color:#262626;font-weight:normal;transform:scaleX(0.912);transform-origin:100% 0;">3</div>
<div class="a" style="left:111px;top:506px;font-size:12px;line-height:12px;color:#262626;font-weight:normal;transform:scaleX(0.912);transform-origin:0 0;">Полнота, качество, достоверность оформления установленной отчетной документации и предоставляемой информа...</div>
<div class="a" style="left:731px;top:506px;font-size:12px;line-height:12px;color:#262626;font-weight:normal;transform:scaleX(0.912);transform-origin:0 0;">Замечания отсутствуют</div>
<div class="a" style="right:26px;top:506px;font-size:12px;line-height:12px;color:#262626;font-weight:normal;transform:scaleX(0.912);transform-origin:100% 0;">10</div>
<div class="a" style="left:17px;top:522px;width:89px;height:16px;background:#fcee9e"></div>
<div class="a" style="left:107px;top:522px;width:619px;height:16px;background:#fcee9e"></div>
<div class="a" style="left:727px;top:522px;width:618px;height:16px;background:#fbd920"></div>
<div class="a" style="left:1346px;top:522px;width:130px;height:16px;background:#fcee9e"></div>
<div class="a" style="left:17px;top:539px;width:1459px;height:1px;background:#e6e6e6"></div>
<div class="a" style="right:1396px;top:525px;font-size:12px;line-height:12px;color:#111;font-weight:normal;transform:scaleX(0.912);transform-origin:100% 0;">4</div>
<div class="a" style="left:111px;top:525px;font-size:12px;line-height:12px;color:#111;font-weight:normal;transform:scaleX(0.912);transform-origin:0 0;">Своевременность и полнота выполнения трудовых обязанностей</div>
<div class="a" style="right:26px;top:525px;font-size:12px;line-height:12px;color:#111;font-weight:normal;transform:scaleX(0.912);transform-origin:100% 0;">10</div>
<div class="a" style="left:17px;top:540px;width:1459px;height:18px;background:#f8f8f8"></div>
<div class="a" style="left:17px;top:558px;width:1459px;height:1px;background:#e6e6e6"></div>
<div class="a" style="right:1396px;top:544px;font-size:12px;line-height:12px;color:#262626;font-weight:normal;transform:scaleX(0.912);transform-origin:100% 0;">5</div>
<div class="a" style="left:111px;top:544px;font-size:12px;line-height:12px;color:#262626;font-weight:normal;transform:scaleX(0.912);transform-origin:0 0;">Соблюдение правил внутреннего трудового распорядка и трудовой дисциплины</div>
<div class="a" style="left:731px;top:544px;font-size:12px;line-height:12px;color:#262626;font-weight:normal;transform:scaleX(0.912);transform-origin:0 0;">Соблюдается</div>
<div class="a" style="right:26px;top:544px;font-size:12px;line-height:12px;color:#262626;font-weight:normal;transform:scaleX(0.912);transform-origin:100% 0;">10</div>
<div class="a" style="left:17px;top:577px;width:1459px;height:1px;background:#e6e6e6"></div>
<div class="a" style="right:1396px;top:563px;font-size:12px;line-height:12px;color:#262626;font-weight:normal;transform:scaleX(0.912);transform-origin:100% 0;">6</div>
<div class="a" style="left:111px;top:563px;font-size:12px;line-height:12px;color:#262626;font-weight:normal;transform:scaleX(0.912);transform-origin:0 0;">Соблюдение специальных норм и правил (инструкций по правилам пожарной безопасности, охране труда, по эксплу...</div>
<div class="a" style="left:731px;top:563px;font-size:12px;line-height:12px;color:#262626;font-weight:normal;transform:scaleX(0.912);transform-origin:0 0;">Соблюдаются</div>
<div class="a" style="right:26px;top:563px;font-size:12px;line-height:12px;color:#262626;font-weight:normal;transform:scaleX(0.912);transform-origin:100% 0;">10</div>
<div class="a" style="left:17px;top:578px;width:1459px;height:18px;background:#f8f8f8"></div>
<div class="a" style="left:17px;top:596px;width:1459px;height:1px;background:#e6e6e6"></div>
<div class="a" style="right:1396px;top:582px;font-size:12px;line-height:12px;color:#262626;font-weight:normal;transform:scaleX(0.912);transform-origin:100% 0;">7</div>
<div class="a" style="left:111px;top:582px;font-size:12px;line-height:12px;color:#262626;font-weight:normal;transform:scaleX(0.912);transform-origin:0 0;">Соблюдение сроков предоставления установленной отчетной документации и информации</div>
<div class="a" style="left:731px;top:582px;font-size:12px;line-height:12px;color:#262626;font-weight:normal;transform:scaleX(0.912);transform-origin:0 0;">Соблюдаются</div>
<div class="a" style="right:26px;top:582px;font-size:12px;line-height:12px;color:#262626;font-weight:normal;transform:scaleX(0.912);transform-origin:100% 0;">10</div>
<div class="a" style="left:16px;top:639px;width:1461px;height:191px;border:1px solid #a6a6a6;background:#fff"></div>
<div class="a" style="left:18px;top:641px;width:1345px;height:18px;background:#f2f2f2"></div>
<div class="a" style="left:21px;top:644px;font-size:12px;line-height:12px;color:#4d4d4d;font-weight:normal;transform:scaleX(0.9);transform-origin:0 0;">Показатель</div>
<div class="a" style="left:1366px;top:641px;width:109px;height:18px;background:#f2f2f2"></div>
<div class="a" style="left:1364px;top:640px;width:1px;height:20px;background:#c8c8c8"></div>
<div class="a" style="left:1369px;top:644px;font-size:12px;line-height:12px;color:#4d4d4d;font-weight:normal;transform:scaleX(0.9);transform-origin:0 0;">Значение</div>
<div class="a" style="left:17px;top:660px;width:1459px;height:1px;background:#cbcbcb"></div>
<div class="a" style="left:17px;top:662px;width:1347px;height:16px;background:#fcee9e"></div>
<div class="a" style="left:1365px;top:662px;width:111px;height:16px;background:#fdf6d4"></div>
<div class="a" style="left:17px;top:679px;width:1459px;height:1px;background:#e6e6e6"></div>
<div class="a" style="left:21px;top:665px;font-size:12px;line-height:12px;color:#111;font-weight:normal;transform:scaleX(0.912);transform-origin:0 0;">Коэффициент сложности ЭК</div>
<div class="a" style="right:26px;top:665px;font-size:12px;line-height:12px;color:#111;font-weight:normal;transform:scaleX(0.912);transform-origin:100% 0;">1,00</div>
<div class="a" style="left:17px;top:698px;width:1459px;height:1px;background:#e6e6e6"></div>
<div class="a" style="left:21px;top:684px;font-size:12px;line-height:12px;color:#262626;font-weight:normal;transform:scaleX(0.912);transform-origin:0 0;">Сложный коэффициент ЭК</div>
<div class="a" style="right:26px;top:684px;font-size:12px;line-height:12px;color:#262626;font-weight:normal;transform:scaleX(0.912);transform-origin:100% 0;">1,00</div>
<div class="dash" style="top:439px"></div>
<div class="dash" style="top:636px"></div>

<div class="a" style="left:16px;top:836px;width:17px;height:17px;border:1px solid #cfcfcf;border-radius:3px;background:#fff"></div>
<svg style="left:22px;top:841px" width="5" height="7" viewBox="0 0 5 7"><path d="M.8 .6L4 3.5L.8 6.4" fill="none" stroke="#0f8a3c" stroke-width="1.5"/></svg>
<div class="a" style="left:16px;top:879px;width:2px;height:4px;background:#0f8a3c"></div>
<div class="a" style="left:1314px;top:880px;width:163px;height:6px;border:1px solid #b0b0b0;border-bottom:none;border-radius:3px 3px 0 0;-webkit-mask-image:linear-gradient(#000 40%,transparent)"></div>
<div class="a" style="left:4px;top:895px;width:1492px;height:4px;background:#c2c2c2"></div>
<svg style="left:1485.5px;top:199.5px" width="7" height="5" viewBox="0 0 7 5"><path d="M0 4.5H7L3.5 .5Z" fill="#c4c4c4"/></svg>
<div class="a" style="left:1485px;top:214px;width:7.5px;height:646px;border-radius:3.75px;background:#d8d8d8"></div>
<div class="a" style="left:1485px;top:214px;width:7.5px;height:600px;border-radius:3.75px;background:#9a9a9a"></div>
<svg style="left:1484px;top:869px" width="9" height="6" viewBox="0 0 9 6"><path d="M0 .5H9L4.5 5.5Z" fill="#555"/></svg>

<div class="a" style="left:36px;top:837px;font-size:12px;line-height:12px;color:#169447;font-weight:normal;transform:scaleX(0.9);transform-origin:0 0;">Подписи</div>
<div class="a" style="left:16px;top:861px;font-size:14px;line-height:14px;color:#169447;font-weight:normal;transform:scaleX(0.93);transform-origin:0 0;">Текущий статус</div>
</body></html>
